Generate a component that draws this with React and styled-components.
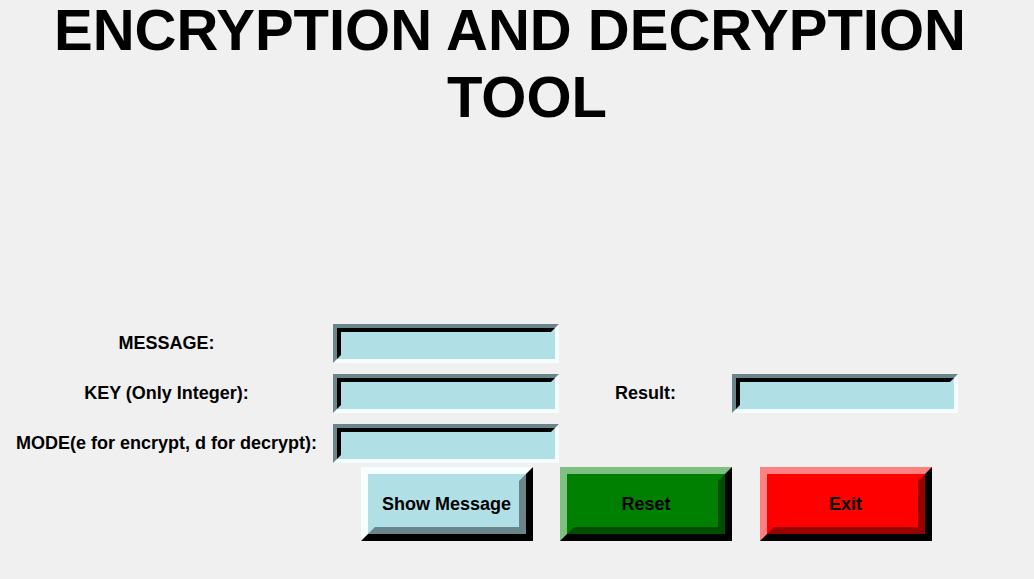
import React from 'react'
import styled, { createGlobalStyle } from 'styled-components'

const GlobalStyle = createGlobalStyle`
  html, body {
    margin: 0;
    padding: 0;
    background: #f0f0f0;
  }
  body {
    font-family: "Liberation Sans", Arial, sans-serif;
  }
`

const Page = styled.div`
  width: 1034px;
  height: 579px;
  overflow: hidden;
  display: flex;
  flex-direction: column;
  background: #f0f0f0;
  color: #000;
`

const Title = styled.h1`
  margin: 0;
  font-size: 58px;
  font-weight: 700;
  line-height: 60px;
  text-align: center;
`

const TitleLine = styled.span`
  display: block;
  margin-top: ${props => props.$gap || 0}px;
  padding-left: ${props => Math.max(0, props.$offset * 2)}px;
  padding-right: ${props => Math.max(0, -props.$offset * 2)}px;
`

const Form = styled.div`
  margin-top: 191px;
  display: grid;
  grid-template-columns: 333px 226px 173px 226px;
  grid-template-rows: 50px 50px 50px 80px;
`

const Label = styled.label`
  justify-self: center;
  align-self: center;
  font-size: 18px;
  font-weight: 700;
  white-space: nowrap;
  grid-column: ${props => props.$col || 1};
  grid-row: ${props => props.$row};
`

const Entry = styled.div`
  box-sizing: border-box;
  width: 226px;
  height: 39px;
  align-self: center;
  border: 4px solid;
  border-color: #6a868a #f5fdfe #f5fdfe #6a868a;
  grid-column: ${props => props.$col || 2};
  grid-row: ${props => props.$row};
`

const EntryField = styled.input`
  box-sizing: border-box;
  display: block;
  width: 100%;
  height: 100%;
  margin: 0;
  padding: 0 4px;
  border: 4px solid;
  border-color: #000 #b0e0e6 #b0e0e6 #000;
  background: #b0e0e6;
  font-family: "Liberation Sans", Arial, sans-serif;
  font-size: 16px;
  outline: none;
`

const tones = {
  blue: { face: '#b0e0e6', light: '#f7ffff', dark: '#6a868a' },
  green: { face: '#008000', light: '#7fbf7f', dark: '#004d00' },
  red: { face: '#ff0000', light: '#ff8080', dark: '#990000' },
}

const Button = styled.button`
  box-sizing: border-box;
  width: 172px;
  height: 74px;
  margin: -1px 0 0 1px;
  padding: 0;
  justify-self: center;
  align-self: start;
  grid-column: ${props => props.$col};
  grid-row: 4;
  border: 7px solid;
  border-color: ${props => tones[props.$tone].light} #000 #000 ${props => tones[props.$tone].light};
  background: ${props => tones[props.$tone].face};
  cursor: pointer;
`

const Face = styled.span`
  box-sizing: border-box;
  display: flex;
  align-items: center;
  justify-content: center;
  width: 100%;
  height: 100%;
  border: 7px solid;
  border-color: ${props => tones[props.$tone].face} ${props => tones[props.$tone].dark} ${props => tones[props.$tone].dark} ${props => tones[props.$tone].face};
  font-family: "Liberation Sans", Arial, sans-serif;
  font-size: 18px;
  font-weight: 700;
  color: #000;
`

const ToolButton = ({ tone, col, children }) => (
  <Button $tone={tone} $col={col}>
    <Face $tone={tone}>{children}</Face>
  </Button>
)

export default function App() {
  return (
    <Page>
      <GlobalStyle />
      <Title>
        <TitleLine $offset={-7}>ENCRYPTION AND DECRYPTION</TitleLine>
        <TitleLine $offset={10} $gap={7}>TOOL</TitleLine>
      </Title>
      <Form>
        <Label $row={1}>MESSAGE:</Label>
        <Entry $row={1}><EntryField /></Entry>

        <Label $row={2}>KEY (Only Integer):</Label>
        <Entry $row={2}><EntryField /></Entry>
        <Label $row={2} $col={3}>Result:</Label>
        <Entry $row={2} $col={4}><EntryField /></Entry>

        <Label $row={3}>MODE(e for encrypt, d for decrypt):</Label>
        <Entry $row={3}><EntryField /></Entry>

        <ToolButton tone="blue" col={2}>Show Message</ToolButton>
        <ToolButton tone="green" col={3}>Reset</ToolButton>
        <ToolButton tone="red" col={4}>Exit</ToolButton>
      </Form>
    </Page>
  )
}
